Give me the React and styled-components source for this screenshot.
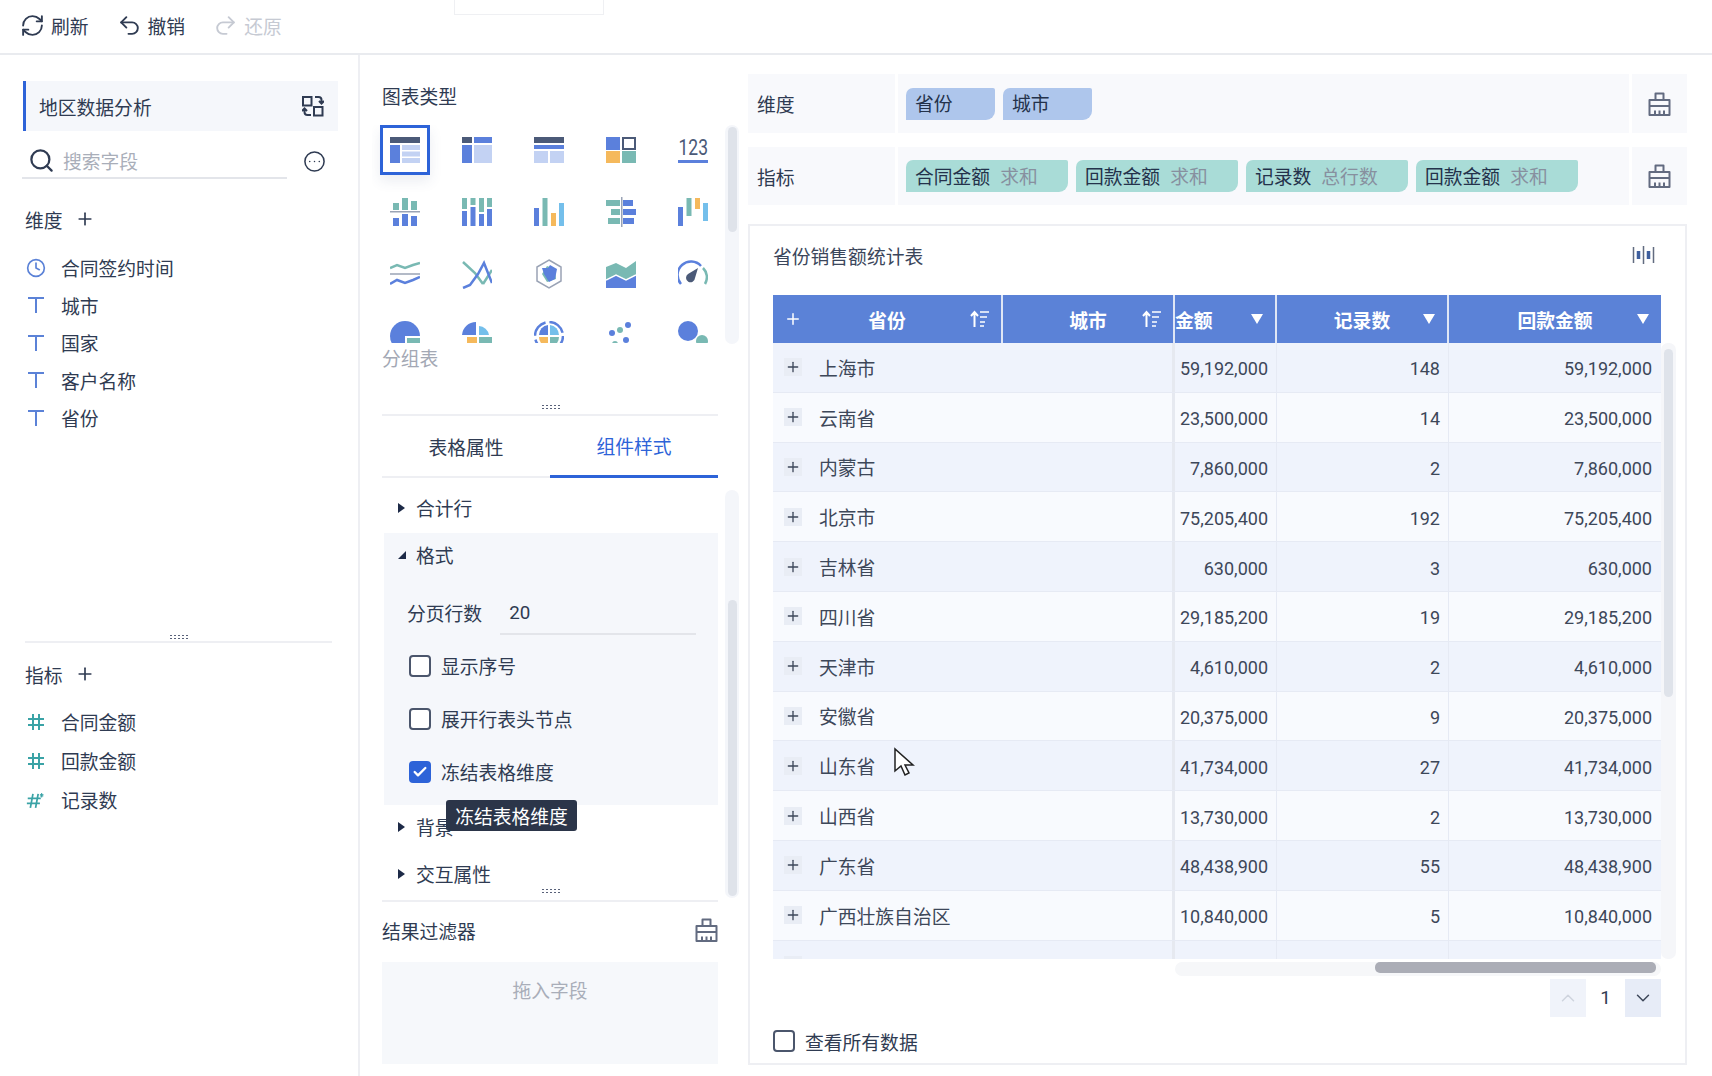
import React from 'react';
import styled, { createGlobalStyle } from 'styled-components';
import { RefreshCw, Undo2, Redo2, Search, CircleEllipsis, Plus, Clock, ChevronUp, ChevronDown, Check } from 'lucide-react';

const BLUE = '#5b80dc';
const DARK = '#4b5a78';
const LIGHT = '#c3d2f3';
const TEAL = '#79b9b3';
const ORANGE = '#f5b95c';
const SKY = '#74bfeb';

const GlobalStyle = createGlobalStyle`
  html, body {
    margin: 0;
    padding: 0;
    background: #fff;
  }
  body {
    width: 1712px;
    height: 1076px;
    overflow: hidden;
    font-family: Roboto, "Noto Sans CJK SC", sans-serif;
    font-size: 18.8px;
    color: #2f3b52;
  }
`;

const Page = styled.div`
  position: relative;
  width: 1712px;
  height: 1076px;
  display: flex;
  flex-direction: column;
`;

const TopBar = styled.div`
  height: 55px;
  flex: none;
  box-sizing: border-box;
  border-bottom: 2px solid #e9ebef;
  display: flex;
  align-items: center;
  padding: 0 0 3px 20px;
`;

const TopAction = styled.div`
  display: flex;
  align-items: center;
  gap: 6px;
  margin-right: 28px;
  color: ${p => (p.$disabled ? '#c6cad3' : '#2f3b52')};
`;

const TabStub = styled.div`
  align-self: flex-start;
  width: 150px;
  height: 15px;
  margin-left: 144px;
  box-sizing: border-box;
  border: 1px solid #eff0f3;
  border-top: none;
`;

const Body = styled.div`
  flex: 1;
  display: flex;
  min-height: 0;
`;

const FieldPanel = styled.aside`
  width: 360px;
  flex: none;
  box-sizing: border-box;
  border-right: 2px solid #eeeff3;
  padding: 26px 20px 257px 23px;
  display: flex;
  flex-direction: column;
`;

const DatasetTitle = styled.div`
  height: 50px;
  flex: none;
  box-sizing: border-box;
  border-left: 3px solid #2d63d8;
  background: #f5f7fb;
  padding: 0 14px 0 13px;
  display: flex;
  align-items: center;
  justify-content: space-between;
`;

const SearchRow = styled.div`
  margin-top: 12px;
  display: flex;
  align-items: center;
  justify-content: space-between;
  padding-right: 12px;
`;

const SearchBox = styled.div`
  width: 265px;
  height: 36px;
  margin-left: -1px;
  box-sizing: border-box;
  border-bottom: 2px solid #e3e5ea;
  display: flex;
  align-items: center;
  gap: 8px;
  padding: 0 0 0 6px;
  color: #a9aeb9;
`;

const SectionHead = styled.div`
  display: flex;
  align-items: center;
  gap: 12px;
  height: 26px;
  margin-top: ${p => p.$top}px;
  padding-left: 2px;
`;

const FieldList = styled.div`
  display: flex;
  flex-direction: column;
  margin-top: ${p => p.$top}px;
`;

const FieldRow = styled.div`
  height: ${p => p.$height}px;
  display: flex;
  align-items: center;
  gap: 15px;
  padding-left: 3px;
`;

const FieldIconBox = styled.span`
  width: 20px;
  display: flex;
  justify-content: center;
`;

const Grip = styled.div`
  height: 5px;
  flex: none;
  align-self: center;
  width: 19px;
  margin-top: ${p => p.$top || 0}px;
  margin-right: ${p => p.$right || 0}px;
  background-image: radial-gradient(circle, #59627a 0.9px, transparent 1.1px);
  background-size: 4px 3px;
`;

const SplitLine = styled.div`
  height: 2px;
  flex: none;
  background: #eeeff3;
  margin: ${p => p.$top ?? 2}px ${p => p.$right || 0}px 0 ${p => p.$left || 0}px;
`;

const Spacer = styled.div`
  flex: 1;
`;

const ChartColumn = styled.section`
  width: 384px;
  flex: none;
  box-sizing: border-box;
  padding: 15px 26px 0 22px;
  display: flex;
  flex-direction: column;
`;

const PlainLabel = styled.div`
  height: 26px;
  flex: none;
  display: flex;
  align-items: center;
  color: ${p => (p.$muted ? '#a3a8b4' : 'inherit')};
  margin-top: ${p => p.$top || 0}px;
`;

const ScrollArea = styled.div`
  display: grid;
  grid-template-columns: 336px 14px;
  column-gap: 7px;
  flex: none;
  margin-top: ${p => p.$top || 0}px;
  height: ${p => p.$height}px;
`;

const ChartGrid = styled.div`
  display: grid;
  grid-template-columns: repeat(5, 50px);
  grid-auto-rows: 50px;
  column-gap: 22px;
  row-gap: 12px;
  height: 218px;
  overflow: hidden;
  padding: 0 8px;
  margin-right: -8px;
  margin-left: -10px;
`;

const ChartCell = styled.div`
  box-sizing: border-box;
  display: flex;
  align-items: center;
  justify-content: center;
  border: ${p => (p.$active ? '3px solid #2d63d8' : 'none')};
  box-shadow: ${p => (p.$active ? '0 6px 12px rgba(60, 80, 130, 0.10)' : 'none')};
  svg {
    flex: none;
    overflow: hidden;
  }
`;

const ScrollTrack = styled.div`
  box-sizing: border-box;
  background: #f4f6fa;
  border-radius: 7px;
  padding-top: ${p => p.$thumbTop}px;
  height: ${p => p.$height}px;
  display: flex;
  justify-content: center;
`;

const ScrollThumb = styled.div`
  width: 9px;
  height: ${p => p.$height}px;
  border-radius: 5px;
  background: #dfe3ea;
`;

const Tabs = styled.div`
  display: grid;
  grid-template-columns: 168px 168px;
  width: 336px;
  height: 62px;
  flex: none;
`;

const Tab = styled.div`
  display: flex;
  align-items: center;
  justify-content: center;
  box-sizing: border-box;
  color: ${p => (p.$active ? '#2d63d8' : 'inherit')};
  border-bottom: ${p => (p.$active ? '3px solid #2d63d8' : '2px solid #eeeff3')};
`;

const PropertyList = styled.div`
  display: flex;
  flex-direction: column;
  margin-left: 2px;
  position: relative;
`;

const CollapseHead = styled.div`
  display: flex;
  align-items: center;
  gap: 11px;
  height: ${p => p.$height || 47}px;
  box-sizing: border-box;
  padding: 0 0 ${p => p.$lift || 4}px 14px;
  flex: none;
`;

const Caret = styled.span`
  width: 0;
  height: 0;
  flex: none;
  border-left: 7px solid #1d2a47;
  border-top: 5px solid transparent;
  border-bottom: 5px solid transparent;
`;

const CaretOpen = styled.span`
  width: 0;
  height: 0;
  flex: none;
  margin-right: -1px;
  border-right: 8px solid #1d2a47;
  border-top: 8px solid transparent;
`;

const FormatPanel = styled.div`
  background: #f5f7fb;
  height: 272px;
  flex: none;
  box-sizing: border-box;
`;

const PagingRow = styled.div`
  display: flex;
  align-items: flex-start;
  padding-left: 23px;
  height: 43px;
  margin-top: 16px;
`;

const PagingInput = styled.div`
  width: 196px;
  height: 39px;
  margin-left: 18px;
  box-sizing: border-box;
  border-bottom: 2px solid #e3e5ea;
  padding-left: 9px;
  line-height: 35px;
`;

const PagingLabel = styled.div`
  line-height: 38px;
`;

const CheckRow = styled.div`
  display: flex;
  align-items: center;
  gap: 10px;
  height: 53px;
  padding-left: ${p => p.$inset ?? 25}px;
`;

const FooterCheck = styled(CheckRow)`
  height: 22px;
  margin-top: 13px;
`;

const CheckBox = styled.span`
  width: 22px;
  height: 22px;
  flex: none;
  box-sizing: border-box;
  border-radius: 4px;
  border: ${p => (p.$checked ? 'none' : '2px solid #4b566c')};
  background: ${p => (p.$checked ? '#2d63d8' : '#fff')};
  display: flex;
  align-items: center;
  justify-content: center;
  color: #fff;
`;

const Tooltip = styled.div`
  position: absolute;
  left: 62px;
  top: 310px;
  height: 31px;
  width: 131px;
  border-radius: 3px;
  background: #2b3549;
  color: #fff;
  display: flex;
  align-items: center;
  justify-content: center;
`;

const FilterHead = styled.div`
  display: flex;
  align-items: center;
  justify-content: space-between;
  height: 26px;
  flex: none;
  margin-top: 15px;
  padding-right: 2px;
  width: 336px;
`;

const DropZone = styled.div`
  margin-top: 19px;
  width: 336px;
  height: 102px;
  flex: none;
  background: #f6f8fb;
  color: #a9aeb9;
  text-align: center;
  line-height: 60px;
`;

const MainColumn = styled.main`
  width: 939px;
  margin-left: 4px;
  padding-top: 19px;
  display: flex;
  flex-direction: column;
`;

const ShelfRow = styled.div`
  display: grid;
  grid-template-columns: 147px 1fr 55px;
  column-gap: 3px;
  height: ${p => p.$height}px;
  margin-bottom: ${p => p.$bottom}px;
`;

const ShelfCell = styled.div`
  background: #f8f9fc;
  display: flex;
  align-items: center;
  justify-content: ${p => (p.$center ? 'center' : 'flex-start')};
  gap: 8px;
  padding-left: ${p => p.$pad || 0}px;
`;

const Pill = styled.div`
  width: ${p => p.$width}px;
  height: 32px;
  box-sizing: border-box;
  padding-left: 9px;
  padding-bottom: 2px;
  display: flex;
  align-items: center;
  gap: 10px;
  border-radius: 7px 2px 9px 0;
  background: ${p => (p.$kind === 'measure' ? '#a9dcd7' : '#aec6ec')};
  color: #24324b;
  span {
    color: #87909f;
  }
`;

const Card = styled.div`
  height: 841px;
  box-sizing: border-box;
  border: 2px solid #eeeff3;
  padding: 0 24px 0 23px;
  display: flex;
  flex-direction: column;
`;

const CardHead = styled.div`
  height: 69px;
  box-sizing: border-box;
  padding: 0 6px 11px 0;
  display: flex;
  align-items: center;
  justify-content: space-between;
  color: #3b465b;
  flex: none;
`;

const TableFrame = styled.div`
  height: 664px;
  display: grid;
  grid-template-columns: 888px 16px;
  flex: none;
  margin-right: -16px;
`;

const TableClip = styled.div`
  height: 664px;
  overflow: hidden;
`;

const COLS = '230px 172px 102px 172px 212px';

const HeaderRow = styled.div`
  display: grid;
  grid-template-columns: ${COLS};
  height: 48px;
  background: #5b82d7;
  color: #fff;
  font-weight: 700;
`;

const HeadCell = styled.div`
  box-sizing: border-box;
  border-right: ${p => (p.$last ? 'none' : '2px solid #dfe6f5')};
  display: grid;
  grid-template-columns: ${p => (p.$scrolled ? '1fr auto' : '1fr auto 1fr')};
  align-items: center;
  padding: ${p => (p.$scrolled ? '0 11px 0 0' : '0 11px')};
`;

const HeadEnd = styled.div`
  display: flex;
  justify-content: ${p => p.$align};
  align-items: center;
  font-weight: 400;
`;

const SortDown = styled.span`
  width: 0;
  height: 0;
  margin-right: 1px;
  border-top: 10px solid #fff;
  border-left: 6px solid transparent;
  border-right: 6px solid transparent;
`;

const DataRow = styled.div`
  display: grid;
  grid-template-columns: ${COLS};
  height: 49.8px;
  box-sizing: border-box;
  border-bottom: 1px solid #e6eaf4;
  background: ${p => (p.$odd ? '#eff3fc' : '#f8fafe')};
  color: #3d4759;
`;

const DimCell = styled.div`
  grid-column: span 2;
  display: flex;
  align-items: center;
  gap: 17px;
  padding: 0 0 0 11px;
  border-right: 3px solid #e6e9f0;
`;

const ExpandBox = styled.span`
  width: 18px;
  height: 18px;
  background: #e9edf5;
  color: #3d4759;
  display: flex;
  align-items: center;
  justify-content: center;
`;

const NumCell = styled.div`
  display: flex;
  align-items: center;
  justify-content: flex-end;
  padding: 3px 8px 0 0;
  font-size: 18px;
  box-sizing: border-box;
  border-right: 1px solid ${p => (p.$last ? 'transparent' : '#e6eaf4')};
`;

const VBar = styled.div`
  box-sizing: border-box;
  margin-top: 48px;
  height: 616px;
  width: 15px;
  background: #f5f6f9;
  border-radius: 7px;
  padding-top: 6px;
  display: flex;
  justify-content: center;
`;

const HBarRow = styled.div`
  height: 14px;
  margin: 3px 0 0 402px;
  width: 486px;
  flex: none;
  box-sizing: border-box;
  background: #f6f7f9;
  border-radius: 7px;
  padding: 0 5px 3px 200px;
  display: flex;
`;

const HBarThumb = styled.div`
  flex: 1;
  border-radius: 5px;
  background: #abadb6;
`;

const Pager = styled.div`
  display: flex;
  justify-content: flex-end;
  align-items: center;
  margin-top: 3px;
  height: 38px;
  flex: none;
`;

const PagerButton = styled.div`
  width: 36px;
  height: 38px;
  display: flex;
  align-items: center;
  justify-content: center;
  background: ${p => (p.$disabled ? '#f0f3fa' : '#e7ecf7')};
  color: ${p => (p.$disabled ? '#cfd4de' : '#3d4759')};
`;

const PagerNumber = styled.div`
  width: 39px;
  text-align: center;
`;

const CursorMark = styled.svg`
  position: absolute;
  left: 893px;
  top: 747px;
`;

const TIcon = ({ color = '#5b82d7' }) => (
  <svg width="20" height="20" viewBox="0 0 20 20" fill="none" stroke={color} strokeWidth="2">
    <path d="M2 3h16M10 3v15" />
  </svg>
);

const GridIcon = () => (
  <svg width="20" height="20" viewBox="0 0 20 20" fill="none" stroke="#3aa3a6" strokeWidth="2">
    <path d="M7 2v16M13 2v16M2 7h16M2 13h16" />
  </svg>
);

const CalcIcon = () => (
  <svg width="23" height="20" viewBox="0 0 23 20" fill="none" stroke="#3aa3a6" strokeWidth="2">
    <path d="M8 3L5 19M14 3l-3 16M2 8h15M1 14h15" />
    <path d="M18 2v5M16 3.5l4 2M20 3.5l-4 2" stroke="#3aa3a6" strokeWidth="1.2" />
  </svg>
);

const SwapIcon = () => (
  <svg width="22" height="22" viewBox="0 0 22 22" fill="none" stroke="#2f3b52" strokeWidth="2">
    <rect x="1" y="2" width="8.5" height="8.5" />
    <rect x="12" y="12" width="8.5" height="8.5" />
    <path d="M13 2h3.5a3 3 0 0 1 3 3v3M17 6l2.5 2.5L22 6" />
    <path d="M9 20H5.5a3 3 0 0 1-3-3v-3M0 16l2.500-2.500L5 16" />
  </svg>
);

const BrushIcon = () => (
  <svg width="23" height="24" viewBox="0 0 23 24" fill="none" stroke="#626b80" strokeWidth="2" strokeLinejoin="round">
    <path d="M7.5 8V1.500h8V8" />
    <path d="M1.500 8h20v15h-20zM1.500 14h20M7 23v-4.500M11.500 23v-4.500M16 23v-4.500" />
  </svg>
);

const BarsIcon = () => (
  <svg width="23" height="20" viewBox="0 0 23 20" fill="none" stroke="#626b80" strokeWidth="1.5">
    <path d="M1.5 2v16M21.5 2v16M11.5 1v18" />
    <path d="M6.5 6v8M16.5 6v8" stroke="#3f5f9e" strokeWidth="3.5" />
  </svg>
);

const SortIcon = () => (
  <svg width="20" height="18" viewBox="0 0 20 18" fill="none" stroke="#fff" strokeWidth="1.6">
    <path d="M4.500 17V2M1 6l3.500-4L8 6" strokeWidth="2" />
    <path d="M10 2h9M10 7h7M10 12h5M10 16h4" />
  </svg>
);

const r = (x, y, w, h, fill) => <rect x={x} y={y} width={w} height={h} fill={fill} />;

const CHART_ICONS = [
  <>{r(0, 2, 30, 6, DARK)}{r(0, 10, 10, 18, BLUE)}{r(12, 10, 18, 5, LIGHT)}{r(12, 16.5, 18, 5, LIGHT)}{r(12, 23, 18, 5, LIGHT)}</>,
  <>{r(0, 2, 10, 6, DARK)}{r(12, 2, 18, 6, BLUE)}{r(0, 10, 10, 18, BLUE)}{r(12, 10, 18, 18, LIGHT)}</>,
  <>{r(0, 2, 30, 6, DARK)}{r(0, 10, 30, 4, BLUE)}{r(0, 16, 14, 12, LIGHT)}{r(16, 16, 14, 12, LIGHT)}</>,
  <>{r(0, 2, 14, 13, BLUE)}<rect x="17" y="3" width="12" height="11" fill="none" stroke={DARK} strokeWidth="2" />{r(0, 16, 14, 12, ORANGE)}{r(16, 16, 14, 12, TEAL)}</>,
  <><text transform="translate(0.5 20) scale(1 1.3)" fontSize="17.5" fontFamily="Roboto, sans-serif" fill={DARK}>123</text>{r(0, 25, 30, 3, BLUE)}</>,
  <>{r(3, 6, 6, 7, TEAL)}{r(12, 1, 6, 12, TEAL)}{r(21, 4, 6, 9, TEAL)}{r(0, 14, 30, 1.5, '#9aa3b5')}{r(3, 21, 6, 8, BLUE)}{r(12, 17, 6, 12, BLUE)}{r(21, 19, 6, 10, BLUE)}</>,
  <>{r(0, 1, 5, 11, TEAL)}{r(0, 14, 5, 15, BLUE)}{r(8.5, 1, 5, 7, TEAL)}{r(8.5, 10, 5, 19, BLUE)}{r(17, 1, 5, 14, TEAL)}{r(17, 17, 5, 12, BLUE)}{r(25, 1, 5, 9, TEAL)}{r(25, 12, 5, 17, BLUE)}</>,
  <>{r(0, 11, 5, 18, BLUE)}{r(8.5, 1, 5, 28, TEAL)}{r(17, 16, 5, 13, ORANGE)}{r(25, 6, 5, 23, SKY)}</>,
  <>{r(0, 3, 14, 6, TEAL)}{r(5, 12, 9, 6, TEAL)}{r(2, 21, 12, 6, TEAL)}{r(17, 3, 10, 6, BLUE)}{r(17, 12, 13, 6, BLUE)}{r(17, 21, 11, 6, BLUE)}{r(15, 0, 1.5, 30, '#9aa3b5')}</>,
  <>{r(0, 10, 5, 19, BLUE)}{r(8.5, 1, 5, 18, TEAL)}{r(17, 1, 5, 11, ORANGE)}{r(25, 6, 5, 18, SKY)}</>,
  <g fill="none" strokeWidth="2.5"><path d="M0 9l7-3 8 3 8-3 7-2" stroke={TEAL} /><path d="M0 15h30" stroke="#9aa3b5" strokeWidth="1.5" /><path d="M0 25l7-4 8 3 8-3 7-3" stroke={BLUE} /></g>,
  <g fill="none" strokeWidth="2.5"><path d="M1 3l12 11 8 11M21 25l9-14" stroke={TEAL} /><path d="M1 29l7-3 8-11 6-11 8 20" stroke={BLUE} /></g>,
  <><path d="M15 1l12 7v14l-12 7-12-7V8z" fill="none" stroke="#9aa3b5" strokeWidth="1.5" /><path d="M8 15l5-8 8 3 1 10-9 3z" fill={TEAL} /><path d="M8 9l6 0 2-3 7 4-2 10-6 3-5-8z" fill={BLUE} /></>,
  <><path d="M0 8l10-4 10 5 10-7v15l-10 5-10-5-10 5z" fill={TEAL} /><path d="M0 21l10-5 10 5 10-5v13H0z" fill={BLUE} /><path d="M0 21l10-5 10 5 10-5" fill="none" stroke="#fff" strokeWidth="1.5" /></>,
  <><path d="M3 25a13 13 0 0 1 20-18" fill="none" stroke={BLUE} strokeWidth="2.5" /><path d="M25 9a13 13 0 0 1 2 16" fill="none" stroke={TEAL} strokeWidth="2.5" /><path d="M20 9l-3 10a4.5 4.5 0 1 1-7-4z" fill={DARK} /></>,
  <><path d="M15 0a15 15 0 1 1-15 15a15 15 0 0 1 15-15z" fill={BLUE} />{r(15, 15, 15, 15, '#fff')}{r(17, 17, 13, 13, TEAL)}</>,
  <><path d="M14 1v13H0a14 14 0 0 1 14-13z" fill={BLUE} /><path d="M17 5a11 11 0 0 1 10 9H17z" fill={SKY} />{r(5, 16, 10, 14, ORANGE)}{r(17, 16, 13, 14, TEAL)}</>,
  <><circle cx="15" cy="15" r="14" fill="none" stroke={BLUE} strokeWidth="2.5" strokeDasharray="18 4" /><path d="M14 4v10H5a10 10 0 0 1 9-10z" fill={BLUE} /><path d="M16 4a10 10 0 0 1 9 10h-9z" fill={SKY} /><path d="M5 16h9v10a10 10 0 0 1-9-10z" fill={ORANGE} /><path d="M16 16h9a10 10 0 0 1-9 10z" fill={TEAL} /></>,
  <><circle cx="6" cy="12" r="3" fill={BLUE} /><circle cx="14" cy="9" r="3" fill={TEAL} /><circle cx="22" cy="4" r="3" fill={BLUE} /><circle cx="20" cy="19" r="3" fill={BLUE} /><circle cx="9" cy="23" r="3" fill={TEAL} /></>,
  <><circle cx="10" cy="10" r="10" fill={BLUE} /><circle cx="24" cy="20" r="6" fill={TEAL} /><circle cx="13" cy="28" r="3" fill={ORANGE} /></>,
];

const DIMENSIONS = ['城市', '国家', '客户名称', '省份'];

const ROWS = [
  ['上海市', '59,192,000', '148'],
  ['云南省', '23,500,000', '14'],
  ['内蒙古', '7,860,000', '2'],
  ['北京市', '75,205,400', '192'],
  ['吉林省', '630,000', '3'],
  ['四川省', '29,185,200', '19'],
  ['天津市', '4,610,000', '2'],
  ['安徽省', '20,375,000', '9'],
  ['山东省', '41,734,000', '27'],
  ['山西省', '13,730,000', '2'],
  ['广东省', '48,438,900', '55'],
  ['广西壮族自治区', '10,840,000', '5'],
  ['', '', ''],
];

const MEASURE_PILLS = [
  ['合同金额', '求和'],
  ['回款金额', '求和'],
  ['记录数', '总行数'],
  ['回款金额', '求和'],
];

const App = () => (
  <Page>
    <GlobalStyle />
    <TopBar>
      <TopAction><RefreshCw size={25} strokeWidth={1.8} />刷新</TopAction>
      <TopAction><Undo2 size={25} strokeWidth={1.8} />撤销</TopAction>
      <TopAction $disabled><Redo2 size={25} strokeWidth={1.8} />还原</TopAction>
      <TabStub />
    </TopBar>
    <Body>
      <FieldPanel>
        <DatasetTitle>地区数据分析<SwapIcon /></DatasetTitle>
        <SearchRow>
          <SearchBox><Search size={27} color="#2f3b52" strokeWidth={2} />搜索字段</SearchBox>
          <CircleEllipsis size={23} strokeWidth={1.6} />
        </SearchRow>
        <SectionHead $top={27}>维度<Plus size={20} /></SectionHead>
        <FieldList $top={17}>
          <FieldRow $height={37.5}><FieldIconBox><Clock size={20} color="#5b82d7" strokeWidth={2} /></FieldIconBox>合同签约时间</FieldRow>
          {DIMENSIONS.map(name => (
            <FieldRow key={name} $height={37.5}><FieldIconBox><TIcon /></FieldIconBox>{name}</FieldRow>
          ))}
        </FieldList>
        <Spacer />
        <Grip $right={4} />
        <SplitLine $left={2} $right={6} />
        <SectionHead $top={18}>指标<Plus size={20} /></SectionHead>
        <FieldList $top={15}>
          <FieldRow $height={39}><FieldIconBox><GridIcon /></FieldIconBox>合同金额</FieldRow>
          <FieldRow $height={39}><FieldIconBox><GridIcon /></FieldIconBox>回款金额</FieldRow>
          <FieldRow $height={39}><FieldIconBox><CalcIcon /></FieldIconBox>记录数</FieldRow>
        </FieldList>
      </FieldPanel>

      <ChartColumn>
        <PlainLabel $top={12}>图表类型</PlainLabel>
        <ScrollArea $top={17} $height={219}>
          <ChartGrid>
            {CHART_ICONS.map((icon, i) => (
              <ChartCell key={i} $active={i === 0}>
                <svg width="30" height="30" viewBox="0 0 30 30">{icon}</svg>
              </ChartCell>
            ))}
          </ChartGrid>
          <ScrollTrack $thumbTop={2} $height={219}><ScrollThumb $height={105} /></ScrollTrack>
        </ScrollArea>
        <PlainLabel $muted>分组表</PlainLabel>
        <Grip $top={34} />
        <SplitLine $top={5} />
        <Tabs>
          <Tab>表格属性</Tab>
          <Tab $active>组件样式</Tab>
        </Tabs>
        <ScrollArea $top={12} $height={411}>
          <PropertyList>
            <CollapseHead $height={43} $lift={8}><Caret />合计行</CollapseHead>
            <FormatPanel>
              <CollapseHead><CaretOpen />格式</CollapseHead>
              <PagingRow>
                <PagingLabel>分页行数</PagingLabel>
                <PagingInput>20</PagingInput>
              </PagingRow>
              <CheckRow><CheckBox />显示序号</CheckRow>
              <CheckRow><CheckBox />展开行表头节点</CheckRow>
              <CheckRow><CheckBox $checked><Check size={16} strokeWidth={3.5} /></CheckBox>冻结表格维度</CheckRow>
            </FormatPanel>
            <CollapseHead><Caret />背景</CollapseHead>
            <CollapseHead><Caret />交互属性</CollapseHead>
            <Tooltip>冻结表格维度</Tooltip>
          </PropertyList>
          <ScrollTrack $thumbTop={110} $height={408}><ScrollThumb $height={296} /></ScrollTrack>
        </ScrollArea>
        <Grip $top={-13} />
        <SplitLine $top={7} />
        <FilterHead>结果过滤器<BrushIcon /></FilterHead>
        <DropZone>拖入字段</DropZone>
      </ChartColumn>

      <MainColumn>
        <ShelfRow $height={59} $bottom={14}>
          <ShelfCell $pad={9}>维度</ShelfCell>
          <ShelfCell $pad={8}>
            <Pill $width={89}>省份</Pill>
            <Pill $width={89}>城市</Pill>
          </ShelfCell>
          <ShelfCell $center><BrushIcon /></ShelfCell>
        </ShelfRow>
        <ShelfRow $height={58} $bottom={19}>
          <ShelfCell $pad={9}>指标</ShelfCell>
          <ShelfCell $pad={8}>
            {MEASURE_PILLS.map(([field, agg], i) => (
              <Pill key={i} $width={162} $kind="measure">{field}<span>{agg}</span></Pill>
            ))}
          </ShelfCell>
          <ShelfCell $center><BrushIcon /></ShelfCell>
        </ShelfRow>
        <Card>
          <CardHead>省份销售额统计表<BarsIcon /></CardHead>
          <TableFrame>
            <TableClip>
              <HeaderRow>
                <HeadCell>
                  <HeadEnd $align="flex-start"><Plus size={18} /></HeadEnd>省份<HeadEnd $align="flex-end"><SortIcon /></HeadEnd>
                </HeadCell>
                <HeadCell>
                  <span />城市<HeadEnd $align="flex-end"><SortIcon /></HeadEnd>
                </HeadCell>
                <HeadCell $scrolled>
                  金额<HeadEnd $align="flex-end"><SortDown /></HeadEnd>
                </HeadCell>
                <HeadCell>
                  <span />记录数<HeadEnd $align="flex-end"><SortDown /></HeadEnd>
                </HeadCell>
                <HeadCell $last>
                  <span />回款金额<HeadEnd $align="flex-end"><SortDown /></HeadEnd>
                </HeadCell>
              </HeaderRow>
              {ROWS.map(([province, amount, count], i) => (
                <DataRow key={i} $odd={i % 2 === 0}>
                  <DimCell>
                    <ExpandBox><Plus size={16} /></ExpandBox>
                    {province}
                  </DimCell>
                  <NumCell>{amount}</NumCell>
                  <NumCell>{count}</NumCell>
                  <NumCell $last>{amount}</NumCell>
                </DataRow>
              ))}
            </TableClip>
            <VBar><ScrollThumb $height={348} /></VBar>
          </TableFrame>
          <HBarRow><HBarThumb /></HBarRow>
          <Pager>
            <PagerButton $disabled><ChevronUp size={22} strokeWidth={1.6} /></PagerButton>
            <PagerNumber>1</PagerNumber>
            <PagerButton><ChevronDown size={22} strokeWidth={1.6} /></PagerButton>
          </Pager>
          <FooterCheck $inset={0}><CheckBox />查看所有数据</FooterCheck>
        </Card>
      </MainColumn>
    </Body>
    <CursorMark width="22" height="30" viewBox="0 0 22 30">
      <path d="M2 2v22l6-5 4 9 4-2-4-8h8z" fill="#fff" stroke="#222" strokeWidth="1.5" />
    </CursorMark>
  </Page>
);

export default App;
